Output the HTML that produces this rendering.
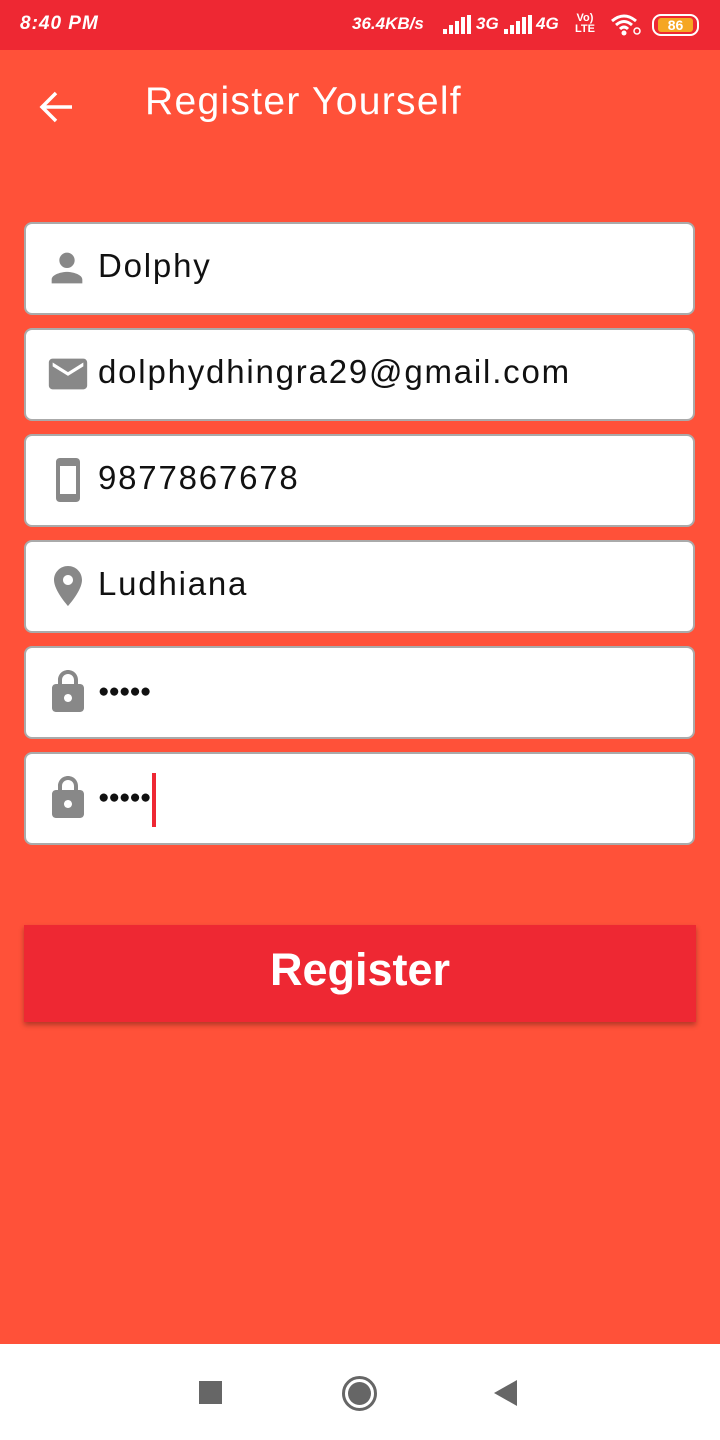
<!DOCTYPE html>
<html><head><meta charset="utf-8"><style>
*{margin:0;padding:0;box-sizing:border-box}
body{width:720px;height:1440px;background:#FF5139;font-family:"Liberation Sans",sans-serif;position:relative;overflow:hidden}
.sb{position:absolute;top:0;left:0;width:720px;height:50px;background:#EE2833;color:#fff}
.sb .t{position:absolute;left:20px;top:13px;font-size:19px;font-weight:bold;font-style:italic;letter-spacing:1px}
.sb .x{position:absolute;top:14px;font-size:17px;font-weight:bold;font-style:italic}
.bat{position:absolute;left:652px;top:14px;width:47px;height:22px;border:2px solid #fff;border-radius:9px;padding:2px 4px}
.bat div{background:#F5A623;height:100%;border-radius:3px;font-size:14px;font-weight:bold;text-align:center;line-height:14px;color:#fff}
.title{position:absolute;left:145px;top:80px;color:#fff;font-size:39px;letter-spacing:1.3px}
.f{position:absolute;left:24px;width:671px;height:93px;background:#fff;border:2px solid #aaa;border-radius:8px}
.f svg{position:absolute;left:20px;top:25px}
.f span{position:absolute;left:72px;top:23px;font-size:33px;color:#111;letter-spacing:1.8px}
.f span.d{font-size:19px;top:33px;letter-spacing:-1px}
.btn{position:absolute;left:24px;top:925px;width:672px;height:97px;background:#EE2833;box-shadow:0 3px 5px rgba(0,0,0,.3);color:#fff;font-size:45px;font-weight:bold;text-align:center;line-height:90px}
.nav{position:absolute;top:1344px;left:0;width:720px;height:96px;background:#fff}
</style></head><body>
<div class="sb"><div class="t">8:40 PM</div>
<div class="x" style="left:352px">36.4KB/s</div>
<svg style="position:absolute;left:443px;top:15px" width="28" height="19"><rect x="0" y="14" width="4" height="5" fill="#fff"/><rect x="6" y="10" width="4" height="9" fill="#fff"/><rect x="12" y="6" width="4" height="13" fill="#fff"/><rect x="18" y="2" width="4" height="17" fill="#fff"/><rect x="24" y="0" width="4" height="19" fill="#fff"/></svg>
<div class="x" style="left:476px">3G</div>
<svg style="position:absolute;left:504px;top:15px" width="28" height="19"><rect x="0" y="14" width="4" height="5" fill="#fff"/><rect x="6" y="10" width="4" height="9" fill="#fff"/><rect x="12" y="6" width="4" height="13" fill="#fff"/><rect x="18" y="2" width="4" height="17" fill="#fff"/><rect x="24" y="0" width="4" height="19" fill="#fff"/></svg>
<div class="x" style="left:536px">4G</div>
<div style="position:absolute;left:575px;top:13px;font-size:11px;font-weight:bold;line-height:11px;text-align:center">Vo)<br>LTE</div>
<svg style="position:absolute;left:610px;top:14px" width="32" height="22" viewBox="0 0 32 22"><path d="M2 7Q14-3 26 7M6 11Q14 4 22 11M10 15Q14 11 18 15" stroke="#fff" stroke-width="3" fill="none"/><circle cx="14" cy="19" r="2.5" fill="#fff"/><circle cx="27" cy="17" r="3" stroke="#fff" stroke-width="1.5" fill="none"/></svg>
<div class="bat"><div>86</div></div></div>
<svg style="position:absolute;left:38px;top:89px" width="36" height="36" viewBox="0 0 36 36"><path d="M34 18H4M18 4L4 18l14 14" stroke="#fff" stroke-width="3.5" fill="none"/></svg>
<div class="title">Register Yourself</div>

<div class="f" style="top:222px"><svg width="46" height="46" viewBox="0 0 24 24" style="top:21px;left:18px"><path fill="#888" d="M12 12c2.2 0 4-1.8 4-4s-1.8-4-4-4-4 1.8-4 4 1.8 4 4 4zm0 2c-2.7 0-8 1.3-8 4v2h16v-2c0-2.7-5.3-4-8-4z"/></svg><span>Dolphy</span></div>
<div class="f" style="top:328px"><svg width="48" height="46" viewBox="0 0 24 24" style="top:21px;left:18px"><path fill="#888" d="M20 4H4c-1.1 0-2 .9-2 2v12c0 1.1.9 2 2 2h16c1.1 0 2-.9 2-2V6c0-1.1-.9-2-2-2zm0 4l-8 5-8-5V6l8 5 8-5v2z"/></svg><span>dolphydhingra29@gmail.com</span></div>
<div class="f" style="top:434px"><svg width="48" height="48" viewBox="0 0 24 24" style="top:20px;left:18px"><path fill="#888" d="M16 1H8C6.6 1 6 2 6 3v18c0 1 .6 2 2 2h8c1.4 0 2-1 2-2V3c0-1-.6-2-2-2zm0 18H8V5h8v14z"/></svg><span>9877867678</span></div>
<div class="f" style="top:540px"><svg width="48" height="48" viewBox="0 0 24 24" style="top:20px;left:18px"><path fill="#888" d="M12 2C8.1 2 5 5.1 5 9c0 5.3 7 13 7 13s7-7.7 7-13c0-3.9-3.1-7-7-7zm0 9.5c-1.4 0-2.5-1.1-2.5-2.5S10.6 6.5 12 6.5s2.5 1.1 2.5 2.5-1.1 2.5-2.5 2.5z"/></svg><span>Ludhiana</span></div>
<div class="f" style="top:646px"><svg width="48" height="48" viewBox="0 0 24 24" style="top:20px;left:18px"><path fill="#888" d="M18 8h-1V6c0-2.8-2.2-5-5-5S7 3.2 7 6v2H6c-1.1 0-2 .9-2 2v10c0 1.1.9 2 2 2h12c1.1 0 2-.9 2-2V10c0-1.1-.9-2-2-2zm-6 9c-1.1 0-2-.9-2-2s.9-2 2-2 2 .9 2 2-.9 2-2 2zM9 8V6c0-1.7 1.3-3 3-3s3 1.3 3 3v2H9z"/></svg><span class="d">●●●●●</span></div>
<div class="f" style="top:752px"><svg width="48" height="48" viewBox="0 0 24 24" style="top:20px;left:18px"><path fill="#888" d="M18 8h-1V6c0-2.8-2.2-5-5-5S7 3.2 7 6v2H6c-1.1 0-2 .9-2 2v10c0 1.1.9 2 2 2h12c1.1 0 2-.9 2-2V10c0-1.1-.9-2-2-2zm-6 9c-1.1 0-2-.9-2-2s.9-2 2-2 2 .9 2 2-.9 2-2 2zM9 8V6c0-1.7 1.3-3 3-3s3 1.3 3 3v2H9z"/></svg><span class="d">●●●●●</span><div style="position:absolute;left:126px;top:19px;width:4px;height:54px;background:#EE2833"></div></div>

<div class="btn">Register</div>
<div class="nav">
<div style="position:absolute;left:199px;top:37px;width:23px;height:23px;background:#666"></div>
<div style="position:absolute;left:342px;top:32px;width:35px;height:35px;border:3px solid #666;border-radius:50%;padding:3px"><div style="width:100%;height:100%;background:#666;border-radius:50%"></div></div>
<svg style="position:absolute;left:494px;top:36px" width="24" height="26" viewBox="0 0 24 26"><path d="M23 0v26L0 13z" fill="#666"/></svg>
</div>
</body></html>
